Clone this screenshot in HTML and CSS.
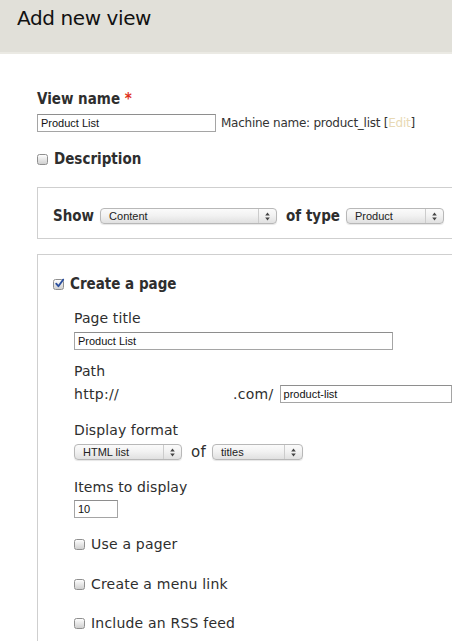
FILE: index.html
```html
<!DOCTYPE html>
<html>
<head>
<meta charset="utf-8">
<link rel="stylesheet" href="styles.css">
</head>
<body>
<div class="header"><h1 class="title">Add new view</h1></div>
<div class="main">
  <div class="field-name">
    <div class="label-strong">View name <span class="req">*</span></div>
    <div class="name-row">
      <div class="textbox tb-name">Product List</div>
      <span class="machine">Machine name: product_list [<span class="edit">Edit</span>]</span>
    </div>
  </div>
  <div class="check-row strong desc-row"><span class="cb"></span>Description</div>

  <div class="fieldset fs-show">
    <div class="show-row">
      <span class="strong">Show</span>
      <div class="sel sel-content"><span class="sel-text">Content</span><span class="sel-arrow"><svg width="5" height="9" viewBox="0 0 5 9"><path d="M2.5 0.5L4.8 3.6H0.2Z M2.5 8.5L4.8 5.4H0.2Z" fill="#444"/></svg></span></div>
      <span class="strong">of type</span>
      <div class="sel sel-type"><span class="sel-text">Product</span><span class="sel-arrow"><svg width="5" height="9" viewBox="0 0 5 9"><path d="M2.5 0.5L4.8 3.6H0.2Z M2.5 8.5L4.8 5.4H0.2Z" fill="#444"/></svg></span></div>
    </div>
  </div>

  <div class="fieldset fs-page">
    <div class="check-row strong page-row"><span class="cb cb-on"><svg width="11" height="11" viewBox="0 0 11 11"><path d="M2.2 5.6L4.4 8.2L9.2 1.6" fill="none" stroke="#2b4f9e" stroke-width="1.8" stroke-linecap="round" stroke-linejoin="round"/></svg></span>Create a page</div>
    <div class="inner">
      <div class="label lbl-title">Page title</div>
      <div class="textbox tb-title">Product List</div>

      <div class="label lbl-path">Path</div>
      <div class="path-row">
        <span class="plain">http://</span>
        <span class="plain com">.com/</span>
        <div class="textbox tb-path">product-list</div>
      </div>

      <div class="label lbl-format">Display format</div>
      <div class="format-row">
        <div class="sel sel-format"><span class="sel-text">HTML list</span><span class="sel-arrow"><svg width="5" height="9" viewBox="0 0 5 9"><path d="M2.5 0.5L4.8 3.6H0.2Z M2.5 8.5L4.8 5.4H0.2Z" fill="#444"/></svg></span></div>
        <span class="plain of">of</span>
        <div class="sel sel-titles"><span class="sel-text">titles</span><span class="sel-arrow"><svg width="5" height="9" viewBox="0 0 5 9"><path d="M2.5 0.5L4.8 3.6H0.2Z M2.5 8.5L4.8 5.4H0.2Z" fill="#444"/></svg></span></div>
      </div>

      <div class="label lbl-items">Items to display</div>
      <div class="textbox tb-items">10</div>

      <div class="check-row opt first-opt"><span class="cb"></span>Use a pager</div>
      <div class="check-row opt"><span class="cb"></span>Create a menu link</div>
      <div class="check-row opt"><span class="cb"></span>Include an RSS feed</div>
    </div>
  </div>
</div>
</body>
</html>
```
FILE: styles.css
```css
html, body {
  margin: 0;
  padding: 0;
  background: #fff;
  overflow: hidden;
}
body {
  font-family: "DejaVu Sans", sans-serif;
  color: #2b2b2b;
  width: 452px;
  height: 641px;
}
.header {
  height: 52px;
  background: #e1e0d9;
  border-bottom: 2px solid #ebeae4;
  padding-left: 17px;
}
.title {
  margin: 0;
  font-weight: normal;
  font-size: 20px;
  line-height: 20px;
  padding-top: 8px;
  color: #111;
  letter-spacing: -0.4px;
}
.main {
  padding-left: 37px;
}
.strong {
  font-weight: bold;
  font-family: "DejaVu Sans Condensed", "DejaVu Sans", sans-serif;
  font-size: 15px;
  color: #2e2e2e;
}
.label-strong {
  font-weight: bold;
  font-family: "DejaVu Sans Condensed", "DejaVu Sans", sans-serif;
  font-size: 15px;
  line-height: 18px;
  margin-top: 36px;
  color: #2e2e2e;
}
.req {
  color: #e0321c;
}
.name-row {
  display: flex;
  align-items: center;
  margin-top: 6px;
  height: 18px;
}
.textbox {
  box-sizing: border-box;
  height: 18px;
  border: 1px solid #a5a5a5;
  border-top-color: #8e8e8e;
  font-family: "Liberation Sans", Arial, sans-serif;
  font-size: 11px;
  line-height: 16px;
  padding-left: 3px;
  color: #111;
  background: #fff;
}
.tb-name { width: 179px; }
.machine {
  font-size: 12px;
  margin-left: 5px;
  color: #333;
  letter-spacing: -0.25px;
}
.edit { color: #e8d9b4; }
.check-row {
  display: flex;
  align-items: center;
}
.cb {
  box-sizing: border-box;
  width: 11px;
  height: 11px;
  border: 1px solid #8f8f8f;
  border-radius: 2.5px;
  background: linear-gradient(#fdfdfd, #e2e2e2 60%, #d0d0d0);
  margin-right: 6px;
  position: relative;
  flex: none;
}
.cb-on svg {
  position: absolute;
  left: 0;
  top: -2px;
}
.desc-row {
  margin-top: 17px;
  height: 20px;
}
.fieldset {
  border: 1px solid #cfcfcf;
  border-right: none;
  padding-left: 15px;
}
.fs-show {
  margin-top: 18px;
  height: 50px;
}
.show-row {
  display: flex;
  align-items: center;
  margin-top: 19px;
  height: 18px;
}
.sel {
  box-sizing: border-box;
  height: 16px;
  border: 1px solid #b8b8b8;
  border-radius: 4px;
  background: linear-gradient(#fbfbfb, #f1f1f1 50%, #e0e0e0);
  display: flex;
  align-items: center;
  font-family: "Liberation Sans", Arial, sans-serif;
  font-size: 11px;
  color: #222;
  box-shadow: 0 1px 1px rgba(0,0,0,0.1);
}
.sel-text {
  flex: 1;
  padding-left: 8px;
}
.sel-arrow {
  width: 17px;
  height: 14px;
  border-left: 1px solid #cccccc;
  display: flex;
  align-items: center;
  justify-content: center;
}
.sel-content { width: 177px; margin: 0 9px 0 6px; }
.sel-type { width: 98px; margin-left: 6px; }
.fs-page {
  margin-top: 15px;
  height: 420px;
}
.page-row {
  margin-top: 19px;
  height: 20px;
}
.inner {
  padding-left: 21px;
}
.label {
  font-size: 14px;
  line-height: 18px;
  color: #2e2e2e;
  letter-spacing: 0.1px;
}
.lbl-title { margin-top: 15px; }
.tb-title {
  width: 319px;
  margin-top: 5px;
}
.lbl-path { margin-top: 12px; }
.path-row {
  display: flex;
  align-items: center;
  margin-top: 5px;
  height: 18px;
}
.plain {
  font-size: 14px;
  color: #2e2e2e;
  letter-spacing: 0.3px;
}
.com { margin-left: 114px; }
.tb-path { width: 200px; margin-left: 6px; }
.lbl-format { margin-top: 18px; }
.format-row {
  display: flex;
  align-items: center;
  margin-top: 4px;
  height: 18px;
}
.sel-format { width: 108px; }
.of { margin: 0 6px 0 9px; font-size: 15px; }
.sel-titles { width: 91px; }
.lbl-items { margin-top: 17px; }
.tb-items {
  width: 44px;
  margin-top: 4px;
}
.opt {
  font-size: 14px;
  height: 18px;
  margin-top: 21px;
  color: #2e2e2e;
  letter-spacing: 0.2px;
}
.first-opt { margin-top: 17px; }
.first-opt + .opt { margin-top: 22px; }
```
